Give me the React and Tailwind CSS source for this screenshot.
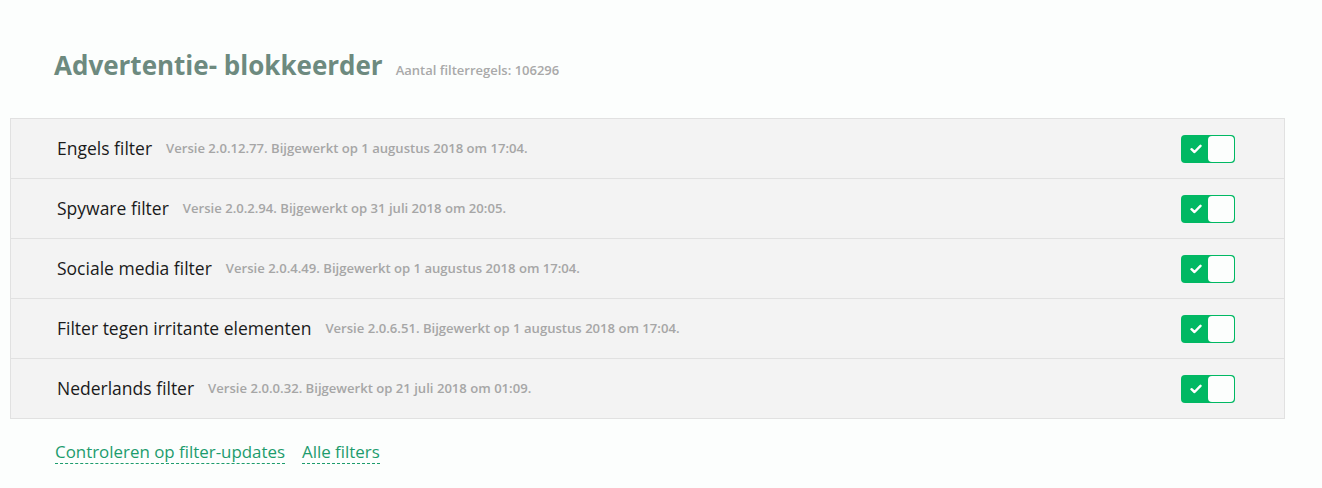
import React from "react";

const filters = [
  { name: "Engels filter", info: "Versie 2.0.12.77. Bijgewerkt op 1 augustus 2018 om 17:04." },
  { name: "Spyware filter", info: "Versie 2.0.2.94. Bijgewerkt op 31 juli 2018 om 20:05." },
  { name: "Sociale media filter", info: "Versie 2.0.4.49. Bijgewerkt op 1 augustus 2018 om 17:04." },
  { name: "Filter tegen irritante elementen", info: "Versie 2.0.6.51. Bijgewerkt op 1 augustus 2018 om 17:04." },
  { name: "Nederlands filter", info: "Versie 2.0.0.32. Bijgewerkt op 21 juli 2018 om 01:09." },
];

const Toggle = () => (
  <div className="relative w-[54px] h-[28px] rounded-[4px] bg-[#00b863] flex items-center">
    <svg width="12" height="10" viewBox="0 0 12 10" className="ml-[9px]">
      <path d="M1.5 5.2 L4.5 8 L10.5 1.8" fill="none" stroke="#fff" strokeWidth="2.4" strokeLinecap="round" strokeLinejoin="round" />
    </svg>
    <div className="absolute right-[1px] top-[1px] w-[26px] h-[26px] rounded-[4px] bg-[#fcfefd]" />
  </div>
);

export default function App() {
  return (
    <div className="min-h-[488px] w-full bg-[#fcfefd] font-['Open_Sans',sans-serif] pt-[52px]">
      <div className="flex items-baseline pl-[54px] h-[36px]">
        <h1 className="text-[26px] font-bold text-[#6d8a7f] leading-none">Advertentie- blokkeerder</h1>
        <span className="ml-[13px] text-[13px] font-semibold text-[#a9a9a9]">Aantal filterregels: 106296</span>
      </div>
      <div className="mt-[30px] ml-[10px] w-[1275px] border border-[#e1e1e1] bg-[#f3f3f3]">
        {filters.map((f, i) => (
          <div
            key={f.name}
            className={`flex items-center pl-[46px] pr-[49px] ${i > 0 ? "h-[60px] border-t border-[#e1e1e1]" : "h-[59px]"}`}
          >
            <span className="text-[17.5px] font-medium text-[#1a1a1a]">{f.name}</span>
            <span className="ml-[14px] text-[13.1px] font-semibold text-[#a6a6a6]">{f.info}</span>
            <div className="ml-auto">
              <Toggle />
            </div>
          </div>
        ))}
      </div>
      <div className="flex pl-[55px] mt-[22px] gap-[17px] text-[16.9px] text-[#1c9c6d]">
        <a className="border-b border-dashed border-[#1c9c6d] leading-[22px]">Controleren op filter-updates</a>
        <a className="border-b border-dashed border-[#1c9c6d] leading-[22px]">Alle filters</a>
      </div>
    </div>
  );
}
